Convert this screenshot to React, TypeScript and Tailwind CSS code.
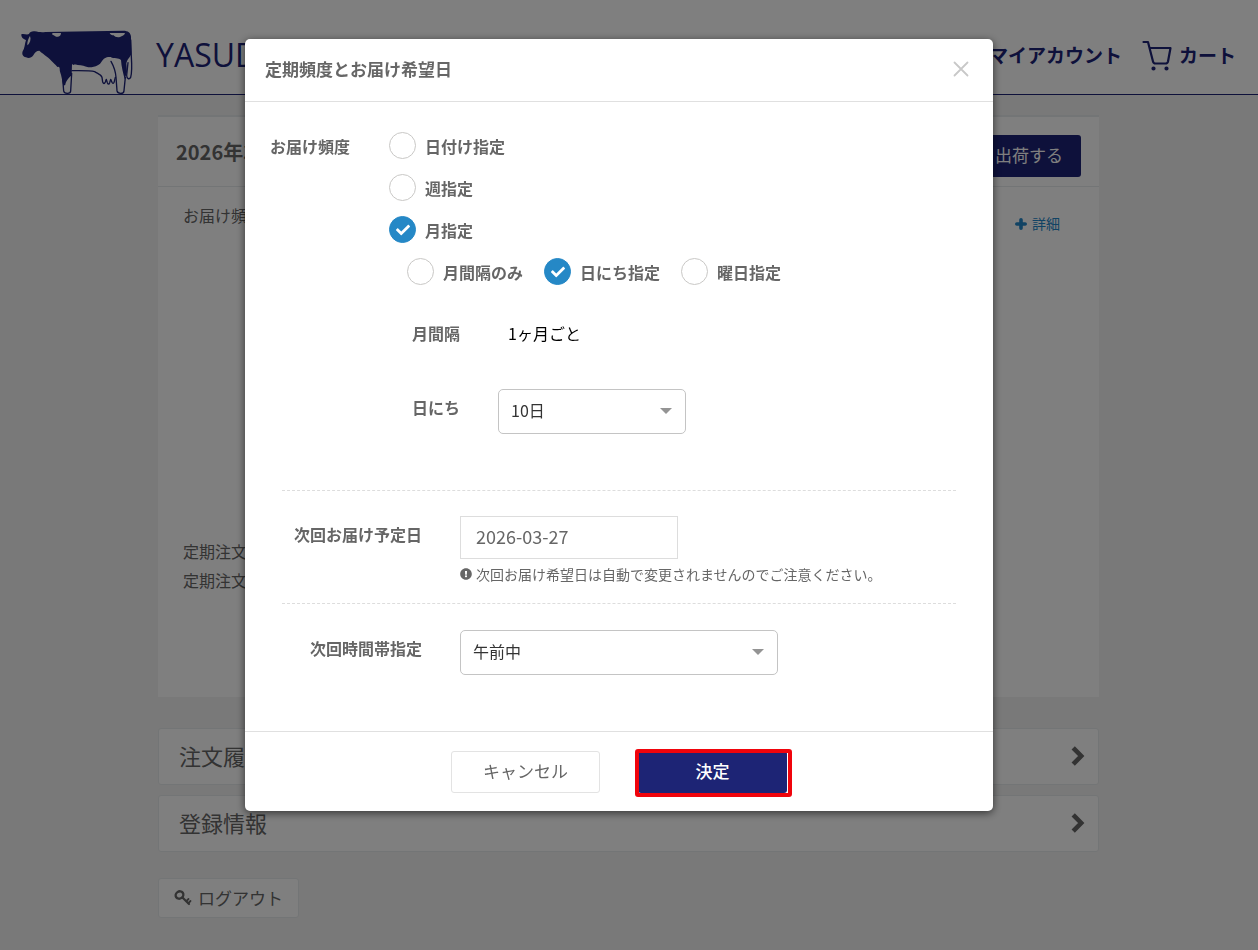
import { useState } from "react";
import type { ReactNode } from "react";
import { FaCheck, FaExclamationCircle } from "react-icons/fa";

const CowLogo = () => (
  <svg viewBox="0 0 390 240" className="w-[130px] h-20 shrink-0" fill="none" aria-hidden="true">
    <path
      fill="#1c2276"
      d="M34 43C42 40 50 46 57 42C59 36 66 33 74 34C86 36 94 38 106 36L340 32C354 32 362 38 363 50L364 100C362 112 352 116 349 130L351 156L344 178C340 160 334 140 333 120C326 112 312 118 302 111C288 110 282 114 274 126C270 134 262 138 248 141C238 143 226 140 220 137C210 134 196 137 186 133L185 166C178 172 168 182 166 194L160 198C156 180 154 165 151 158C148 144 140 138 130 128C116 112 104 106 88 92C80 92 74 98 70 106C64 114 56 116 48 112C38 110 35 102 38 94C44 86 44 72 48 60C42 58 33 54 34 43Z"
    />
    <g fill="#ffffff">
      <path d="M127 39H153C153 44 150 50 144 50C138 52 134 46 127 44Z" />
      <path d="M299 39H345C344 46 336 48 330 51C322 54 314 50 311 46C306 46 300 44 299 39Z" />
      <path d="M60 48C64 58 60 68 53 76C50 72 54 56 60 48Z" />
      <path d="M140 142C146 138 150 142 149 148L150 154Z" />
    </g>
    <g stroke="#1c2276" strokeWidth="4" strokeLinejoin="round" strokeLinecap="round">
      <path d="M158 176L161 213Q162 220 172 220Q182 220 182 213L185 160" />
      <path d="M186 152C210 152 240 151 254 155C266 162 274 164 276 172L278 186Q282 195 286 186L289 178L292 188Q296 197 299 188L302 178L306 187Q311 194 313 184L316 172" />
      <path d="M303 124C312 140 317 156 318 172L321 212Q322 220 332 220Q342 220 342 212L346 172" />
      <path d="M362 60L364 110C366 140 366 158 362 172C358 179 350 177 350 166L354 128" />
    </g>
  </svg>
);

const CartIcon = () => (
  <svg viewBox="0 0 30 31" className="w-[30px] h-[31px]" fill="none" stroke="#1c2276" strokeWidth="2.2" strokeLinecap="round" strokeLinejoin="round" aria-hidden="true">
    <path d="M1.5 2H6L11 21.5Q11.5 23.5 13.5 23.5H23.5Q25.5 23.5 26 21.5L28.5 8H7.5" />
    <circle cx="11.5" cy="28.5" r="1" fill="#1c2276" />
    <circle cx="24.5" cy="28.5" r="1" fill="#1c2276" />
  </svg>
);

const KeyIcon = () => (
  <svg viewBox="0 0 18 18" className="size-[18px]" fill="none" stroke="currentColor" strokeLinecap="round" aria-hidden="true">
    <ellipse cx="5.5" cy="6" rx="4" ry="3.5" strokeWidth="2.4" transform="rotate(-35 5.5 6)" />
    <path d="M8.5 8.5L15 15" strokeWidth="2.2" />
    <path d="M12.5 12L14.5 10M14.5 14L16.5 12" strokeWidth="1.8" />
  </svg>
);

const PlusIcon = () => (
  <svg viewBox="0 0 12 12" className="size-3" fill="none" stroke="currentColor" strokeWidth="3.6" strokeLinecap="round" aria-hidden="true">
    <path d="M6 1.8V10.2M1.8 6H10.2" />
  </svg>
);

const ChevronIcon = () => (
  <svg viewBox="0 0 14 20" className="w-3.5 h-5" fill="none" stroke="currentColor" strokeWidth="4.6" strokeLinejoin="miter" aria-hidden="true">
    <path d="M2.2 1.8L10.2 10L2.2 18.2" />
  </svg>
);

const CloseIcon = () => (
  <svg viewBox="0 0 16 16" className="size-4" fill="none" stroke="#c8c8c8" strokeWidth="1.8" strokeLinecap="round" aria-hidden="true">
    <path d="M1.5 1.5L14.5 14.5M14.5 1.5L1.5 14.5" />
  </svg>
);

type RadioProps = {
  name: string;
  label: string;
  checked: boolean;
  onChange: () => void;
};

const Radio = ({ name, label, checked, onChange }: RadioProps) => (
  <label className="relative flex items-center gap-[9px] font-bold cursor-pointer">
    <input
      type="radio"
      name={name}
      checked={checked}
      onChange={onChange}
      className="appearance-none size-[27px] shrink-0 rounded-full border border-[#c9c8c6] bg-white checked:bg-[#2588c6] checked:border-[#2588c6]"
    />
    {checked && <FaCheck className="absolute left-[7px] size-[14px] text-white pointer-events-none" />}
    {label}
  </label>
);

type SelectBoxProps = {
  id: string;
  className: string;
  children: ReactNode;
};

const SelectBox = ({ id, className, children }: SelectBoxProps) => (
  <div className={`relative ${className}`}>
    <select id={id} className="appearance-none w-full h-[45px] px-3 pb-[3px] rounded-[5px] border border-[#c4c4c4] bg-white text-[#333333]">
      {children}
    </select>
    <svg viewBox="0 0 12 6" className="absolute right-[14px] top-[19px] w-3 h-1.5 pointer-events-none" aria-hidden="true">
      <path d="M0 0H12L6 6Z" fill="#949494" />
    </svg>
  </div>
);

const frequencies = ["日付け指定", "週指定", "月指定"];
const monthlyTypes = ["月間隔のみ", "日にち指定", "曜日指定"];

const DeliveryModal = () => {
  const [frequency, setFrequency] = useState("月指定");
  const [monthlyType, setMonthlyType] = useState("日にち指定");

  return (
    <div role="dialog" aria-modal="true" aria-labelledby="modal-title" className="w-full max-w-[748px] h-fit bg-white rounded-[5px] shadow-[0_2px_8px_rgba(0,0,0,0.6)] text-base text-[#666666]">
      {/* Header */}
      <div className="flex items-center justify-between h-[63px] pl-5 pr-6 pb-[3px] border-b border-[#e0e0e0]">
        <h2 id="modal-title" className="text-[17px] font-bold">定期頻度とお届け希望日</h2>
        <button type="button" aria-label="閉じる">
          <CloseIcon />
        </button>
      </div>

      {/* Frequency */}
      <div className="flex pt-[30px] pl-[25px]">
        <div className="w-[119px] shrink-0 pt-0.5 font-bold">お届け頻度</div>
        <div className="flex flex-col gap-[15px]">
          {frequencies.map((item) => (
            <Radio key={item} name="frequency" label={item} checked={frequency === item} onChange={() => setFrequency(item)} />
          ))}
          <div className="flex gap-[21px] pl-[18px]">
            {monthlyTypes.map((item) => (
              <Radio key={item} name="monthly" label={item} checked={monthlyType === item} onChange={() => setMonthlyType(item)} />
            ))}
          </div>
        </div>
      </div>

      <div className="pl-[167px] pt-9 pb-14">
        <div className="flex">
          <div className="w-24 font-bold">月間隔</div>
          <div className="text-black">1ヶ月ごと</div>
        </div>
        <div className="flex pt-11">
          <label htmlFor="day" className="w-[86px] pt-1.5 font-bold">日にち</label>
          <SelectBox id="day" className="w-[188px]">
            <option>10日</option>
          </SelectBox>
        </div>
      </div>

      {/* Next delivery */}
      <div className="mx-[37px]">
        <div className="flex gap-[38px] pt-[25px] pb-[18px] border-t border-dashed border-[#dddddd]">
          <label htmlFor="next-date" className="w-[140px] shrink-0 pt-1.5 text-right font-bold">次回お届け予定日</label>
          <div>
            <input id="next-date" type="text" defaultValue="2026-03-27" className="block w-[218px] h-[43px] px-[15px] pb-1 border border-[#dddddd] bg-white text-[18px]" />
            <p className="flex items-center gap-1 pt-1 text-[14px] leading-[22px]">
              <FaExclamationCircle className="size-3 shrink-0" />
              次回お届け希望日は自動で変更されませんのでご注意ください。
            </p>
          </div>
        </div>
        <div className="flex gap-[38px] pt-[26px] pb-14 border-t border-dashed border-[#dddddd]">
          <label htmlFor="next-time" className="w-[140px] shrink-0 pt-1.5 text-right font-bold">次回時間帯指定</label>
          <SelectBox id="next-time" className="w-[318px]">
            <option>午前中</option>
          </SelectBox>
        </div>
      </div>

      {/* Footer */}
      <div className="flex justify-center gap-[38px] pt-[19px] pb-[18px] border-t border-[#e0e0e0] text-[17px]">
        <button type="button" className="w-[149px] h-[42px] pb-0.5 rounded-[3px] border border-[#e3e3e3] bg-white">キャンセル</button>
        <div className="relative">
          <button type="button" className="w-[149px] h-[42px] pb-0.5 rounded-[3px] bg-[#1d2475] text-white font-medium">決定</button>
          <span className="absolute -top-0.5 -bottom-1 -left-[3px] -right-[5px] rounded-[3px] border-4 border-[#f0040c] pointer-events-none" />
        </div>
      </div>
    </div>
  );
};

const menuItems = ["注文履歴", "登録情報"];

export default function App() {
  return (
    <div className="min-h-screen bg-[#f3f3f3] text-[#666666] font-['Noto_Sans_CJK_JP',sans-serif]">
      <header className="flex items-center justify-between h-[95px] pl-2.5 pr-[22px] border-b border-[#1c2276] bg-white text-[#1c2276]">
        <a href="#" className="flex items-center gap-4 pt-[26px]">
          <CowLogo />
          <span className="pb-2.5 text-[32px] leading-10 font-['Open_Sans',sans-serif]">YASUD</span>
        </a>
        <nav className="flex items-center gap-5 pt-4 text-[19px] font-bold">
          <a href="#">マイアカウント</a>
          <a href="#" className="flex items-center gap-[7px]">
            <CartIcon />
            カート
          </a>
        </nav>
      </header>

      <main className="max-w-[942px] mx-auto pt-5 pr-px">
        <section className="h-[582px] bg-white border-t-2 border-[#e7eaec]">
          <div className="flex items-center justify-between h-[70px] px-[18px] border-b border-[#e7eaec]">
            <h1 className="text-[20px] font-bold">2026年3月</h1>
            <button type="button" className="h-[42px] mt-2 px-[18px] pb-0.5 rounded-[3px] bg-[#1c2276] text-[17px] text-white">出荷する</button>
          </div>
          <div className="flex justify-between pt-4 pl-[25px] pr-[39px]">
            <div>お届け頻度</div>
            <a href="#" className="flex items-center gap-[5px] pt-2.5 text-[14px] text-[#2386c8]">
              <PlusIcon />
              詳細
            </a>
          </div>
          <div className="pt-[303px] pl-[25px] leading-[29px]">
            <div>定期注文</div>
            <div>定期注文</div>
          </div>
        </section>

        <div className="flex flex-col gap-2.5 pt-[31px]">
          {menuItems.map((item) => (
            <a key={item} href="#" className="flex items-center justify-between h-[57px] pl-5 pr-[13px] pb-0.5 rounded-[3px] border border-[#e7eaec] bg-white text-[22px]">
              {item}
              <ChevronIcon />
            </a>
          ))}
        </div>

        <button type="button" className="flex items-center gap-1.5 h-10 mt-[26px] px-[15px] rounded-[3px] border border-[#e7eaec] bg-white text-[17px]">
          <KeyIcon />
          ログアウト
        </button>
      </main>

      <div className="fixed inset-0 flex justify-center pt-[39px] pr-5 overflow-y-auto bg-black/50">
        <DeliveryModal />
      </div>
    </div>
  );
}
